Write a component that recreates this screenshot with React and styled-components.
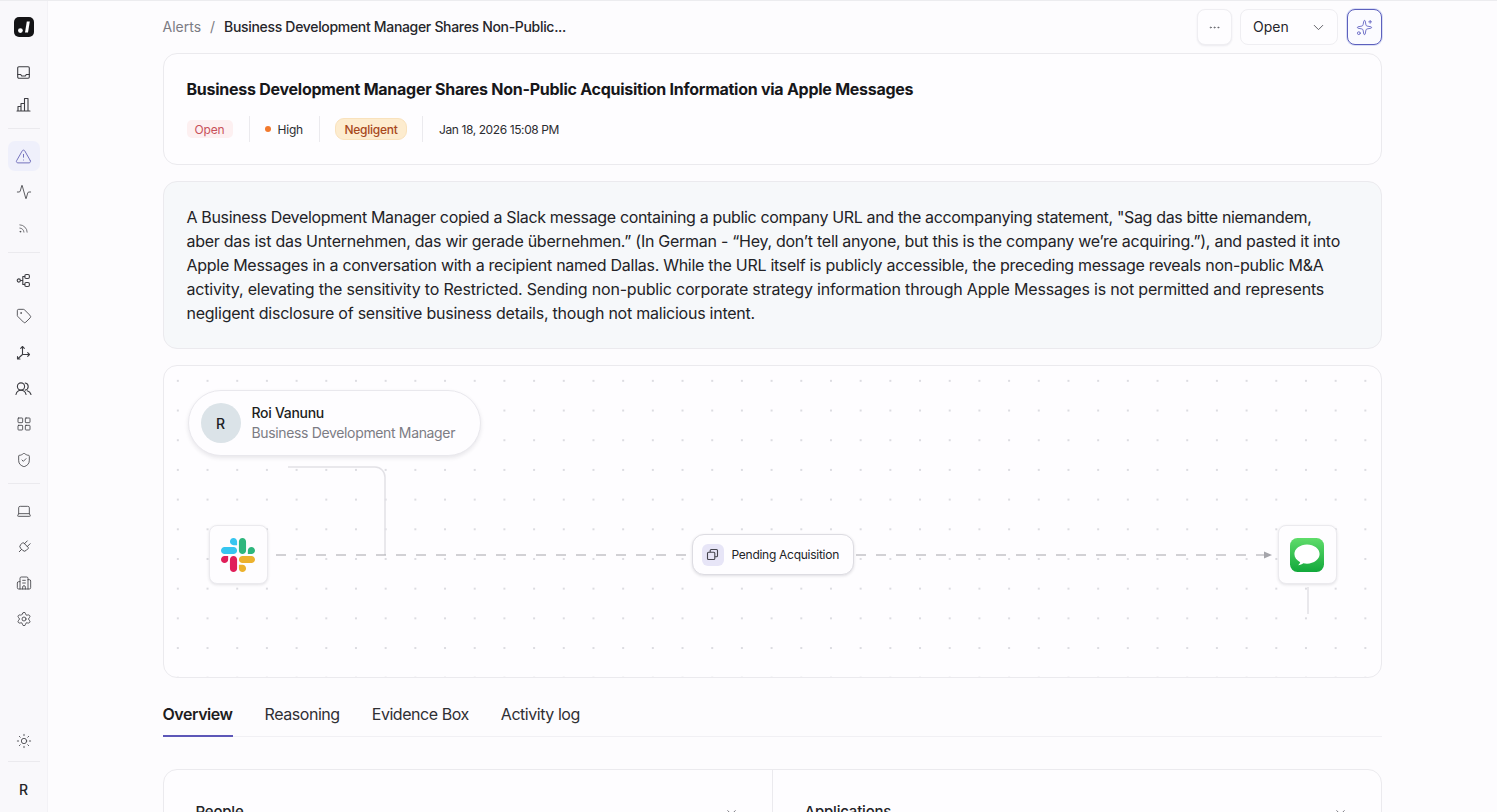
import React from "react";
import styled, { createGlobalStyle } from "styled-components";
import {
  TriangleAlert, Activity, Rss, Tag, LayoutGrid, ShieldCheck,
  Laptop, Plug, Building2, Settings, Sun, ChevronDown, Ellipsis, Sparkles,
} from "lucide-react";

const font = `"Inter", "Noto Sans", sans-serif`;

const Global = createGlobalStyle`
  html, body { margin: 0; height: 100%; overflow: hidden; background: #fdfcfe; }
  body { font-family: ${font}; color: #1b1b1f; }
  * { box-sizing: border-box; }
`;

const Page = styled.div`
  display: flex;
  width: 1497px;
  height: 812px;
  overflow: hidden;
  border-top: 1px solid #ececef;
`;

const Sidebar = styled.aside`
  width: 48px;
  flex: none;
  height: 811px;
  display: flex;
  flex-direction: column;
  align-items: center;
  background: #f9f8fb;
  border-right: 1px solid #f3f2f6;
  padding-top: 16px;
`;

const Logo = styled.div`
  width: 20px;
  height: 20px;
  margin-bottom: 19px;
`;

const Group = styled.div`
  display: flex;
  flex-direction: column;
  align-items: center;
  width: 100%;
`;

const NavItem = styled.div`
  width: 32px;
  height: ${(p) => p.$h || 36}px;
  display: flex;
  align-items: center;
  justify-content: center;
  color: ${(p) => (p.$active ? "#6563b5" : "#3d3d42")};
  position: relative;
  &::before {
    content: "";
    display: ${(p) => (p.$active ? "block" : "none")};
    position: absolute;
    inset: 3px 0;
    border-radius: 7px;
    background: #eff0fb;
  }
  svg { position: relative; }
`;

const PlugTilt = styled.span`
  display: flex;
  transform: rotate(45deg);
`;

const NavDivider = styled.div`
  width: 32px;
  height: 1px;
  background: #ebeaee;
  margin: ${(p) => p.$m || "8px 0 9px"};
`;

const Spacer = styled.div`
  flex: 1;
`;

const Avatar = styled.div`
  height: 46px;
  display: flex;
  align-items: center;
  justify-content: center;
  font-size: 14px;
  font-weight: 500;
  color: #26262a;
`;

const Main = styled.main`
  flex: 1;
  display: flex;
  flex-direction: column;
  padding: 8px 115px 0 114.5px;
  min-width: 0;
`;

const Header = styled.header`
  display: flex;
  align-items: center;
  height: 36px;
  margin-bottom: 8px;
  font-size: 14px;
`;

const Crumb = styled.span`
  color: #7b7b83;
  margin-bottom: 2px;
`;

const Slash = styled.span`
  color: #7b7b83;
  margin: 0 9px 2px 9px;
`;

const CrumbCurrent = styled.span`
  color: #26262b;
  font-weight: 500;
  letter-spacing: -0.32px;
  margin-bottom: 2px;
`;

const HeaderActions = styled.div`
  margin-left: auto;
  display: flex;
  align-items: center;
  gap: 8px;
`;

const IconButton = styled.button`
  width: 35px;
  height: 36px;
  padding: 0;
  display: flex;
  align-items: center;
  justify-content: center;
  background: #fefdff;
  border: 1px solid #efeef2;
  border-radius: 8px;
  box-shadow: 0 1px 2px rgba(30, 30, 60, 0.08);
  color: #55555c;
`;

const AiButton = styled(IconButton)`
  border: 1.5px solid #5d60bd;
  color: #5d5fc0;
  background: #fbfbff;
  margin-left: 1px;
  box-shadow: 0 0 0 1px rgba(110, 130, 220, 0.25);
`;

const Select = styled.div`
  width: 98px;
  height: 36px;
  display: flex;
  align-items: center;
  justify-content: space-between;
  padding: 0 10px 2px 12px;
  border: 1px solid #efeef2;
  border-radius: 8px;
  background: #fefdff;
  font-size: 14px;
  color: #26262b;
  svg { color: #55555c; margin-top: 2px; }
`;

const Card = styled.section`
  border: 1px solid #ebeaee;
  border-radius: 14px;
  background: #fefdff;
  margin-bottom: 16px;
  flex: none;
`;

const TitleCard = styled(Card)`
  height: 112px;
  padding: 24px 23px 0;
`;

const Title = styled.h1`
  margin: 0 0 16px;
  font-size: 16px;
  line-height: 22px;
  font-weight: 700;
  color: #17171a;
  letter-spacing: -0.26px;
  white-space: nowrap;
`;

const Meta = styled.div`
  display: flex;
  align-items: center;
  height: 26px;
  font-size: 12px;
`;

const MetaDivider = styled.div`
  width: 1px;
  height: 26px;
  background: #ebeaee;
  margin: ${(p) => p.$m};
`;

const StatusTag = styled.span`
  height: 18px;
  width: 46px;
  display: flex;
  align-items: center;
  justify-content: center;
  background: #fdf0f1;
  border-radius: 5px;
  color: #c8505a;
  letter-spacing: -0.2px;
`;

const Severity = styled.span`
  display: flex;
  align-items: center;
  gap: 7px;
  color: #2c2c31;
  letter-spacing: -0.2px;
`;

const Dot = styled.i`
  width: 6px;
  height: 6px;
  border-radius: 50%;
  background: #f27a2e;
`;

const IntentTag = styled.span`
  width: 72px;
  height: 22px;
  display: flex;
  align-items: center;
  justify-content: center;
  background: #fdeccf;
  border: 1px solid #f9e2bd;
  border-radius: 9px;
  color: #a8481c;
  font-weight: 500;
  letter-spacing: -0.25px;
`;

const DateText = styled.span`
  color: #2c2c31;
  letter-spacing: -0.4px;
`;

const SummaryCard = styled(Card)`
  height: 168px;
  padding: 23px;
  background: #f6f8fa;
  font-size: 16px;
  line-height: 24px;
  color: #232327;
`;

const SummaryLine = styled.div`
  white-space: nowrap;
  letter-spacing: ${(p) => p.$ls};
`;

const Canvas = styled(Card)`
  position: relative;
  height: 313px;
  overflow: hidden;
  background-color: #fefdff;
  background-image: radial-gradient(circle, #dcdce1 0.75px, transparent 1.1px);
  background-size: 29.7px 29.7px;
  background-position: -1px 0px;
`;

const Wires = styled.svg`
  position: absolute;
  inset: 0;
  width: 100%;
  height: 100%;
`;

const PersonNode = styled.div`
  position: absolute;
  left: 24px;
  top: 24px;
  width: 293px;
  height: 66px;
  display: flex;
  align-items: center;
  gap: 11px;
  padding-left: 12px;
  background: #fefdff;
  border: 1px solid #e9e8ed;
  border-radius: 33px;
  box-shadow: 0 2px 4px rgba(30, 30, 50, 0.1);
`;

const PersonAvatar = styled.div`
  width: 40px;
  height: 40px;
  border-radius: 50%;
  background: #dbe3e8;
  display: flex;
  align-items: center;
  justify-content: center;
  font-size: 14px;
  font-weight: 500;
  color: #202024;
`;

const PersonName = styled.div`
  font-size: 14px;
  line-height: 20px;
  font-weight: 500;
  color: #1d1d21;
  letter-spacing: -0.3px;
`;

const PersonRole = styled.div`
  font-size: 14px;
  line-height: 20px;
  color: #7c7c84;
  letter-spacing: -0.35px;
`;

const AppNode = styled.div`
  position: absolute;
  left: ${(p) => p.$x}px;
  top: 159px;
  width: 59px;
  height: 59px;
  display: flex;
  align-items: center;
  justify-content: center;
  background: #fefdff;
  border: 1px solid #ebeaee;
  border-radius: 8px;
  box-shadow: 0 1px 3px rgba(30, 30, 50, 0.12);
`;

const DataNode = styled.div`
  position: absolute;
  left: 528px;
  top: 168px;
  width: 162px;
  height: 41px;
  display: flex;
  align-items: center;
  gap: 8px;
  padding-left: 9px;
  background: #fefdff;
  border: 1px solid #dddce2;
  border-radius: 12px;
  box-shadow: 0 1px 3px rgba(30, 30, 50, 0.14);
  font-size: 12px;
  color: #232327;
  letter-spacing: -0.27px;
  white-space: nowrap;
`;

const DataIcon = styled.span`
  width: 22px;
  height: 22px;
  border-radius: 6px;
  background: #e7e5f7;
  color: #45454e;
  display: flex;
  align-items: center;
  justify-content: center;
`;

const Tabs = styled.nav`
  display: flex;
  gap: 32px;
  height: 43px;
  border-bottom: 1px solid #f1f0f4;
  flex: none;
`;

const TabItem = styled.div`
  height: 43px;
  padding-top: 8px;
  line-height: 24px;
  font-size: 16px;
  letter-spacing: -0.45px;
  font-weight: ${(p) => (p.$active ? 600 : 400)};
  color: ${(p) => (p.$active ? "#1d1d21" : "#2f2f34")};
  border-bottom: ${(p) => (p.$active ? "2px solid #5d57b8" : "none")};
`;

const BottomCard = styled(Card)`
  margin-top: 32px;
  height: 140px;
  display: grid;
  grid-template-columns: 608px 1fr;
`;

const Panel = styled.div`
  padding: 32px 32px 0;
  display: flex;
  justify-content: space-between;
  align-items: flex-start;
  font-size: 15px;
  line-height: 20px;
  font-weight: 500;
  color: #232327;
  letter-spacing: -0.2px;
  border-left: ${(p) => (p.$divided ? "1px solid #ebeaee" : "none")};
  svg { color: #66666d; margin-top: 3px; margin-right: 1px; }
`;

const LogoMark = () => (
  <Logo>
    <svg width="20" height="20" viewBox="0 0 20 20">
      <rect width="20" height="20" rx="5" fill="#141416" />
      <circle cx="6.4" cy="13.6" r="2.4" fill="#fff" />
      <path d="M11 15.6 12.8 4.4h3L14 15.6z" fill="#fff" />
    </svg>
  </Logo>
);

const stroke = { fill: "none", stroke: "currentColor", strokeWidth: 1.1, strokeLinecap: "round", strokeLinejoin: "round" };

const TrayIcon = () => (
  <svg width="15" height="15" viewBox="0 0 15 15" {...stroke}>
    <rect x="1.700" y="1.800" width="11.600" height="11.400" rx="1.200" />
    <path d="M1.700 9.500h3l1 1.500h3.600l1-1.500h3" />
  </svg>
);

const BarsIcon = () => (
  <svg width="15" height="15" viewBox="0 0 15 15" {...stroke}>
    <path d="M1 14h13M2 14V9.500h3V14M5 14V6.500h3.500V14M8.500 14V1.500h3.500V14" />
  </svg>
);

const FlowIcon = () => (
  <svg width="15" height="15" viewBox="0 0 15 15" {...stroke}>
    <circle cx="2.800" cy="7.500" r="1.600" />
    <rect x="8.800" y="1.500" width="4.600" height="4" rx="1.400" />
    <rect x="8.800" y="9.500" width="4.600" height="4" rx="1.400" />
    <path d="M4.400 7.500h2.400M6.800 3.500v8M6.800 3.500h2M6.800 11.500h2" />
  </svg>
);

const AxesIcon = () => (
  <svg width="15" height="15" viewBox="0 0 15 15" {...stroke}>
    <path d="M6.500 9.500V1.500M4.700 3.300l1.800-1.800 1.800 1.800M6.500 9.500h7M11.700 7.700l1.800 1.800-1.800 1.800M6.500 9.500l-5 4.500M1.500 11.500V14h2.500" />
  </svg>
);

const PeopleIcon = () => (
  <svg width="17" height="15" viewBox="0 0 17 15" {...stroke}>
    <circle cx="6" cy="5.500" r="3.600" />
    <path d="M1 13.500c.6-2.600 2.600-4.200 5-4.200s4.400 1.600 5 4.200" />
    <path d="M10.200 2a3.600 3.600 0 0 1 0 7.100M12.200 9.800c1.800.6 3.300 1.900 3.800 3.700" />
  </svg>
);

const StackIcon = () => (
  <svg width="13" height="13" viewBox="0 0 13 13" fill="none" stroke="currentColor" strokeWidth="1.100" strokeLinejoin="round">
    <rect x="1.500" y="4.200" width="7.300" height="7.300" rx="1" />
    <path d="M4.200 4.200V2.500a1 1 0 0 1 1-1h5.300a1 1 0 0 1 1 1v5.300a1 1 0 0 1-1 1H8.800" />
  </svg>
);

const SlackLogo = () => (
  <svg width="34" height="34" viewBox="0 0 122.8 122.8">
    <path fill="#E01E5A" d="M25.8 77.6c0 7.1-5.8 12.9-12.9 12.9S0 84.7 0 77.6s5.8-12.9 12.9-12.9h12.9v12.9zM32.3 77.6c0-7.1 5.8-12.9 12.9-12.9s12.9 5.8 12.9 12.9v32.3c0 7.1-5.8 12.9-12.9 12.9s-12.9-5.8-12.9-12.9V77.6z" />
    <path fill="#36C5F0" d="M45.2 25.8c-7.1 0-12.9-5.8-12.9-12.9S38.1 0 45.2 0s12.9 5.8 12.9 12.9v12.9H45.2zM45.2 32.3c7.1 0 12.9 5.8 12.9 12.9s-5.8 12.9-12.9 12.9H12.9C5.8 58.1 0 52.3 0 45.2s5.8-12.9 12.9-12.9h32.3z" />
    <path fill="#2EB67D" d="M97 45.2c0-7.1 5.8-12.9 12.9-12.9s12.9 5.8 12.9 12.9-5.8 12.9-12.9 12.9H97V45.2zM90.5 45.2c0 7.1-5.8 12.9-12.9 12.9s-12.9-5.8-12.9-12.9V12.9C64.7 5.8 70.5 0 77.6 0s12.9 5.8 12.9 12.9v32.3z" />
    <path fill="#ECB22E" d="M77.6 97c7.1 0 12.9 5.8 12.9 12.9s-5.8 12.9-12.9 12.9-12.9-5.8-12.9-12.9V97h12.9zM77.6 90.5c-7.1 0-12.9-5.8-12.9-12.9s5.8-12.9 12.9-12.9h32.3c7.1 0 12.9 5.8 12.9 12.9s-5.8 12.9-12.9 12.9H77.6z" />
  </svg>
);

const MessagesLogo = () => (
  <svg width="34" height="34" viewBox="0 0 34 34">
    <defs>
      <linearGradient id="msg" x1="0" y1="0" x2="0" y2="1">
        <stop offset="0" stopColor="#5fdc6a" />
        <stop offset="1" stopColor="#12a83b" />
      </linearGradient>
    </defs>
    <rect width="34" height="34" rx="7.5" fill="url(#msg)" />
    <path d="M17 6.500c-7 0-12.600 4.300-12.600 9.600 0 3.400 2.300 6.400 5.800 8.100-.3 1.100-1 2.200-2 3 2 0 3.800-.8 5.100-1.900 1.200.3 2.400.4 3.700.4 7 0 12.600-4.300 12.600-9.600S24 6.500 17 6.500z" fill="#fff" />
  </svg>
);

const summary = [
  ["A Business Development Manager copied a Slack message containing a public company URL and the accompanying statement, \"Sag das bitte niemandem,", "-0.34px"],
  ["aber das ist das Unternehmen, das wir gerade übernehmen.” (In German - “Hey, don’t tell anyone, but this is the company we’re acquiring.”), and pasted it into", "-0.27px"],
  ["Apple Messages in a conversation with a recipient named Dallas. While the URL itself is publicly accessible, the preceding message reveals non-public M&A", "-0.275px"],
  ["activity, elevating the sensitivity to Restricted. Sending non-public corporate strategy information through Apple Messages is not permitted and represents", "-0.19px"],
  ["negligent disclosure of sensitive business details, though not malicious intent.", "-0.24px"],
];

const ic = { size: 16, strokeWidth: 1.25 };

export default function App() {
  return (
    <Page>
      <Global />
      <Sidebar>
        <LogoMark />
        <Group>
          <NavItem $h={32}><TrayIcon /></NavItem>
          <NavItem $h={32}><BarsIcon /></NavItem>
        </Group>
        <NavDivider />
        <Group>
          <NavItem $active><TriangleAlert size={17} strokeWidth={1.25} /></NavItem>
          <NavItem><Activity {...ic} /></NavItem>
          <NavItem><Rss size={11} strokeWidth={1.5} /></NavItem>
        </Group>
        <NavDivider $m="6px 0 9px" />
        <Group>
          <NavItem><FlowIcon /></NavItem>
          <NavItem><Tag {...ic} /></NavItem>
          <NavItem><AxesIcon /></NavItem>
          <NavItem><PeopleIcon /></NavItem>
          <NavItem><LayoutGrid {...ic} /></NavItem>
          <NavItem><ShieldCheck {...ic} /></NavItem>
        </Group>
        <NavDivider $m="5px 0 9px" />
        <Group>
          <NavItem><Laptop {...ic} /></NavItem>
          <NavItem><PlugTilt><Plug {...ic} /></PlugTilt></NavItem>
          <NavItem><Building2 {...ic} /></NavItem>
          <NavItem><Settings {...ic} /></NavItem>
        </Group>
        <Spacer />
        <NavItem><Sun {...ic} /></NavItem>
        <NavDivider $m="2px 0 4px" />
        <Avatar>R</Avatar>
      </Sidebar>
      <Main>
        <Header>
          <Crumb>Alerts</Crumb>
          <Slash>/</Slash>
          <CrumbCurrent>Business Development Manager Shares Non-Public...</CrumbCurrent>
          <HeaderActions>
            <IconButton aria-label="More"><Ellipsis size={13} strokeWidth={1.3} /></IconButton>
            <Select>Open<ChevronDown size={17} strokeWidth={1.3} /></Select>
            <AiButton aria-label="Assistant"><Sparkles size={17} strokeWidth={1.2} /></AiButton>
          </HeaderActions>
        </Header>
        <TitleCard>
          <Title>Business Development Manager Shares Non-Public Acquisition Information via Apple Messages</Title>
          <Meta>
            <StatusTag>Open</StatusTag>
            <MetaDivider $m="0 15px 0 16px" />
            <Severity><Dot />High</Severity>
            <MetaDivider $m="0 15px 0 16px" />
            <IntentTag>Negligent</IntentTag>
            <MetaDivider $m="0 16px 0 15px" />
            <DateText>Jan 18, 2026 15:08 PM</DateText>
          </Meta>
        </TitleCard>
        <SummaryCard>
          {summary.map(([text, ls]) => (
            <SummaryLine key={text} $ls={ls}>{text}</SummaryLine>
          ))}
        </SummaryCard>
        <Canvas>
          <Wires viewBox="0 0 1217 311" preserveAspectRatio="xMinYMin" fill="none">
            <path d="M124 101H211a10 10 0 0 1 10 10V189" stroke="#e2e1e6" strokeWidth="1.5" />
            <path d="M112 189H1100" stroke="#a5a5ab" strokeWidth="1.2" strokeDasharray="10 10" />
            <path d="M1100 185.500L1108 189L1100 192.500z" fill="#a5a5ab" />
            <path d="M1144 221V248" stroke="#e2e1e6" strokeWidth="1.5" />
          </Wires>
          <PersonNode>
            <PersonAvatar>R</PersonAvatar>
            <div>
              <PersonName>Roi Vanunu</PersonName>
              <PersonRole>Business Development Manager</PersonRole>
            </div>
          </PersonNode>
          <AppNode $x={45}><SlackLogo /></AppNode>
          <DataNode>
            <DataIcon><StackIcon /></DataIcon>
            Pending Acquisition
          </DataNode>
          <AppNode $x={1114}><MessagesLogo /></AppNode>
        </Canvas>
        <Tabs>
          <TabItem $active>Overview</TabItem>
          <TabItem>Reasoning</TabItem>
          <TabItem>Evidence Box</TabItem>
          <TabItem>Activity log</TabItem>
        </Tabs>
        <BottomCard>
          <Panel>People<ChevronDown size={15} strokeWidth={1.4} /></Panel>
          <Panel $divided>Applications<ChevronDown size={15} strokeWidth={1.4} /></Panel>
        </BottomCard>
      </Main>
    </Page>
  );
}
